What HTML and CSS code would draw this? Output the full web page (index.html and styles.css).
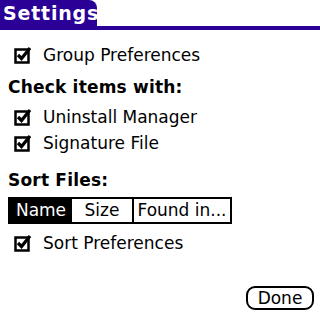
FILE: index.html
```html
<!DOCTYPE html>
<html lang="en">
<head>
    <meta charset="UTF-8">
    <title>Settings</title>
    <link rel="stylesheet" href="styles.css">
</head>
<body>
    <div class="screen">
        <header class="title-bar">
            <div class="title-tab">Settings</div>
        </header>

        <div class="form">
            <label class="check-row first">
                <svg class="check" viewBox="0 0 18 18" width="18" height="18">
                    <rect x="1.5" y="3.5" width="13" height="13" fill="none" stroke="#000" stroke-width="2.5"/>
                    <path d="M4 9 L7.5 12.5 L16 2" fill="none" stroke="#000" stroke-width="3.2"/>
                </svg>
                <span>Group Preferences</span>
            </label>

            <div class="heading">Check items with:</div>

            <label class="check-row tight">
                <svg class="check" viewBox="0 0 18 18" width="18" height="18">
                    <rect x="1.5" y="3.5" width="13" height="13" fill="none" stroke="#000" stroke-width="2.5"/>
                    <path d="M4 9 L7.5 12.5 L16 2" fill="none" stroke="#000" stroke-width="3.2"/>
                </svg>
                <span>Uninstall Manager</span>
            </label>
            <label class="check-row">
                <svg class="check" viewBox="0 0 18 18" width="18" height="18">
                    <rect x="1.5" y="3.5" width="13" height="13" fill="none" stroke="#000" stroke-width="2.5"/>
                    <path d="M4 9 L7.5 12.5 L16 2" fill="none" stroke="#000" stroke-width="3.2"/>
                </svg>
                <span>Signature File</span>
            </label>

            <div class="heading sort">Sort Files:</div>

            <div class="segmented">
                <div class="seg selected name">Name</div>
                <div class="seg size">Size</div>
                <div class="seg found">Found in...</div>
            </div>

            <label class="check-row after-seg">
                <svg class="check" viewBox="0 0 18 18" width="18" height="18">
                    <rect x="1.5" y="3.5" width="13" height="13" fill="none" stroke="#000" stroke-width="2.5"/>
                    <path d="M4 9 L7.5 12.5 L16 2" fill="none" stroke="#000" stroke-width="3.2"/>
                </svg>
                <span>Sort Preferences</span>
            </label>
        </div>

        <footer class="buttons">
            <button class="done">Done</button>
        </footer>
    </div>
</body>
</html>
```

FILE: styles.css
```css
:root {
    --title-color: #2a0096;
    --ink: #000000;
    --paper: #ffffff;
}

* {
    margin: 0;
    padding: 0;
    box-sizing: border-box;
}

body {
    font-family: "DejaVu Sans", "Liberation Sans", sans-serif;
    background: var(--paper);
    color: var(--ink);
}

.screen {
    width: 320px;
    height: 320px;
    display: flex;
    flex-direction: column;
}

.title-bar {
    height: 30px;
    border-bottom: 4px solid var(--title-color);
    display: flex;
}

.title-tab {
    width: 97px;
    height: 26px;
    background: var(--title-color);
    color: var(--paper);
    border-top-right-radius: 8px;
    font-weight: 700;
    font-size: 19px;
    line-height: 26px;
    padding-left: 3px;
    letter-spacing: 0.8px;
}

.form {
    padding-left: 8px;
    display: flex;
    flex-direction: column;
}

.check-row {
    height: 26px;
    display: flex;
    align-items: center;
    padding-left: 6px;
    font-size: 17px;
    gap: 11px;
}

.check-row.first {
    margin-top: 12px;
}

.check-row.tight {
    margin-top: 4px;
}

.check-row.after-seg {
    margin-top: 6px;
}

.check {
    flex: none;
}

.heading {
    height: 26px;
    line-height: 26px;
    margin-top: 6px;
    font-weight: 700;
    font-size: 17px;
    letter-spacing: 0.2px;
}

.heading.sort {
    margin-top: 11px;
}

.segmented {
    margin-top: 4px;
    display: flex;
    width: 224px;
    height: 27px;
    border: 2px solid var(--ink);
}

.seg {
    font-size: 17px;
    line-height: 23px;
    text-align: center;
}

.seg.name {
    width: 62px;
}

.seg.size {
    width: 62px;
    border-right: 2px solid var(--ink);
}

.seg.found {
    flex: 1;
}

.seg.selected {
    background: var(--ink);
    color: var(--paper);
}

.buttons {
    margin-top: auto;
    padding: 0 6px 10px 0;
    display: flex;
    justify-content: flex-end;
}

.done {
    width: 68px;
    height: 24px;
    border: 2px solid var(--ink);
    border-radius: 9px;
    background: var(--paper);
    font-family: inherit;
    font-size: 17px;
    line-height: 19px;
    color: var(--ink);
}
```
